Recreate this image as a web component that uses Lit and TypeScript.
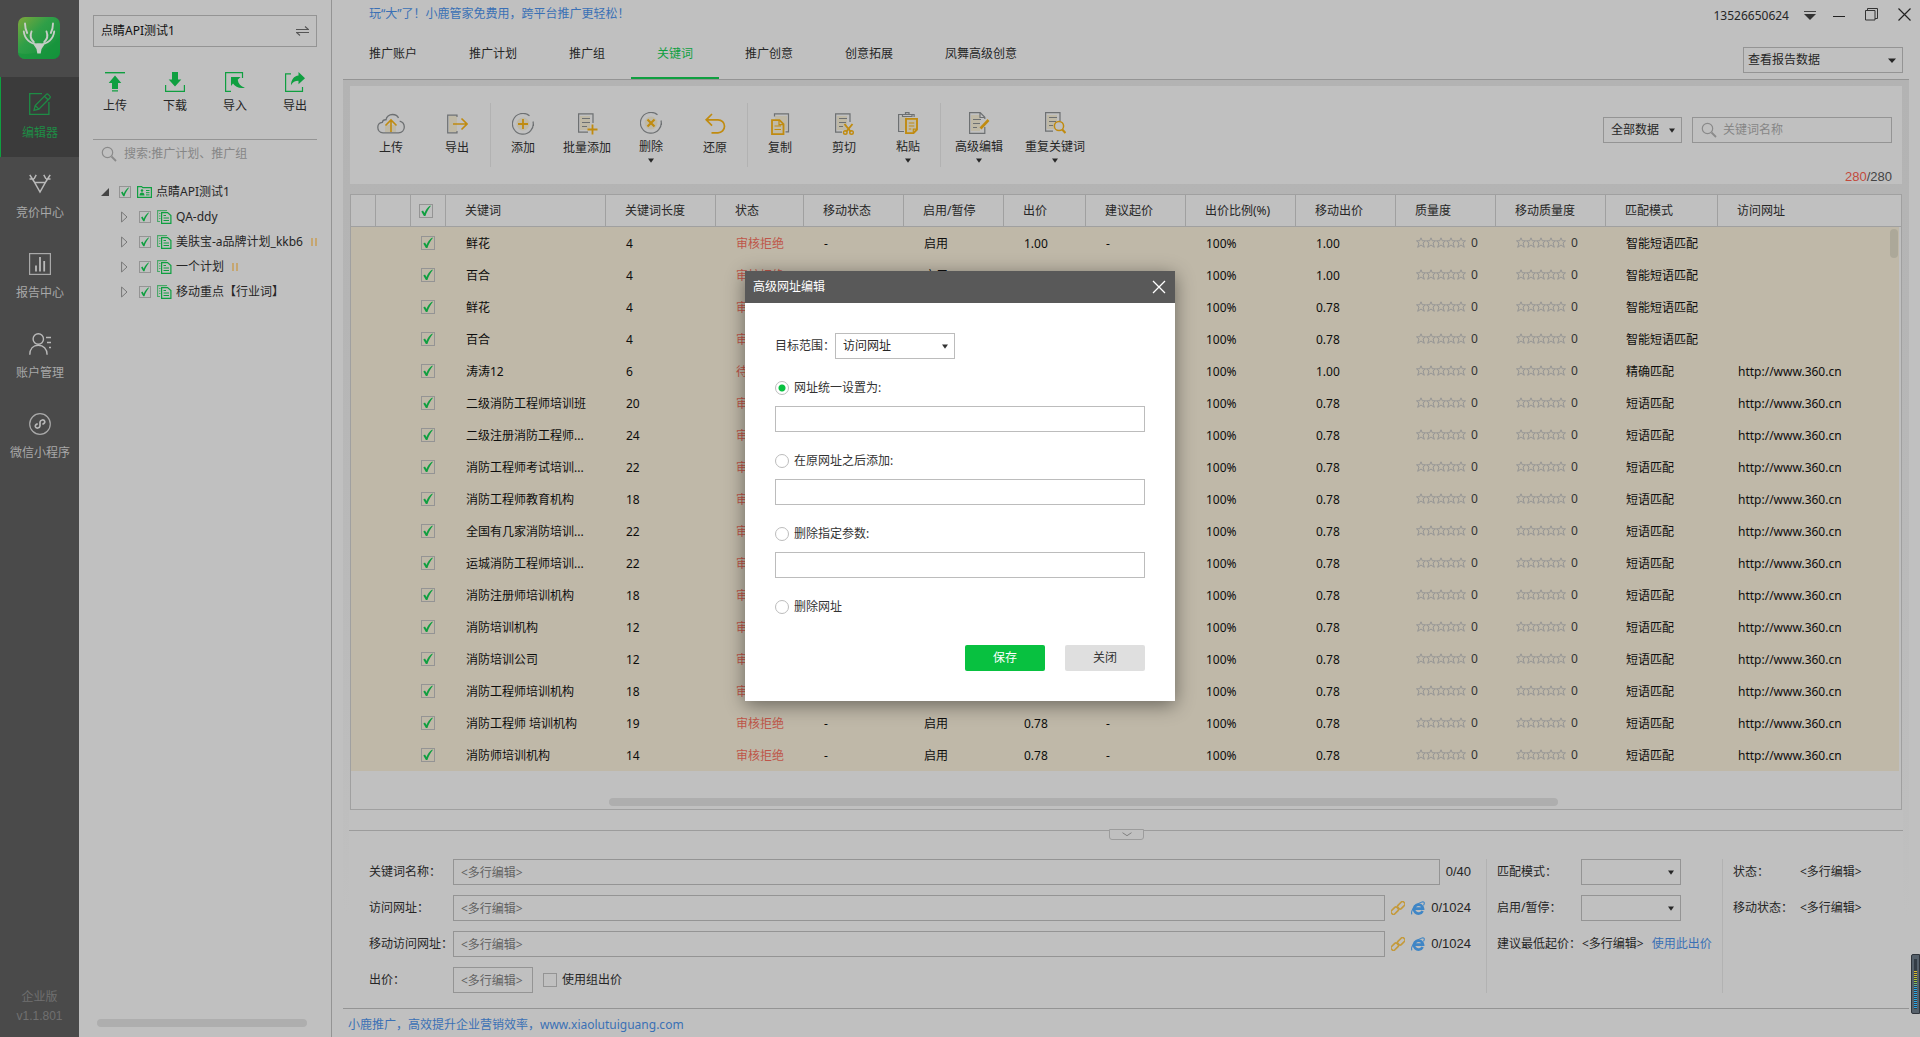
import { LitElement, html, css, svg, nothing, type TemplateResult } from "lit";
import { customElement, state } from "lit/decorators.js";
import { classMap } from "lit/directives/class-map.js";

interface Keyword {
  name: string;
  length: number;
  status: string;
  bid: string;
  match: string;
  url: string;
}

const SITE = "http://www.360.cn";
const REJECTED = "审核拒绝";

const kw = (
  name: string,
  length: number,
  bid = "0.78",
  match = "短语匹配",
  url = SITE,
  status = REJECTED,
): Keyword => ({ name, length, status, bid, match, url });

const KEYWORDS: Keyword[] = [
  kw("鲜花", 4, "1.00", "智能短语匹配", ""),
  kw("百合", 4, "1.00", "智能短语匹配", ""),
  kw("鲜花", 4, "0.78", "智能短语匹配", ""),
  kw("百合", 4, "0.78", "智能短语匹配", ""),
  kw("涛涛12", 6, "1.00", "精确匹配", SITE, "待审核"),
  kw("二级消防工程师培训班", 20),
  kw("二级注册消防工程师...", 24),
  kw("消防工程师考试培训...", 22),
  kw("消防工程师教育机构", 18),
  kw("全国有几家消防培训...", 22),
  kw("运城消防工程师培训...", 22),
  kw("消防注册师培训机构", 18),
  kw("消防培训机构", 12),
  kw("消防培训公司", 12),
  kw("消防工程师培训机构", 18),
  kw("消防工程师 培训机构", 19),
  kw("消防师培训机构", 14),
];

const COLUMNS = [
  "关键词", "关键词长度", "状态", "移动状态", "启用/暂停", "出价", "建议起价",
  "出价比例(%)", "移动出价", "质量度", "移动质量度", "匹配模式", "访问网址",
];

const TABS = ["推广账户", "推广计划", "推广组", "关键词", "推广创意", "创意拓展", "凤舞高级创意"];

const PLANS = [
  { name: "QA-ddy", paused: false },
  { name: "美肤宝-a品牌计划_kkb6", paused: true },
  { name: "一个计划", paused: true },
  { name: "移动重点【行业词】", paused: false },
];

/* ---------- icons ---------- */

const icon = (w: number, h: number, body: TemplateResult) =>
  html`<svg width=${w} height=${h} viewBox="0 0 ${w} ${h}" fill="none" aria-hidden="true">${body}</svg>`;

const G = "#6d7072";
const Y = "#c08b10";
const P = "#bfb9a6";
const GREEN = "#0f9f40";

const caret = () =>
  html`<svg class="caret" width="8" height="5" viewBox="0 0 8 5" aria-hidden="true"><path d="M0 .5h8L4 5z" fill="currentColor"/></svg>`;

const smallCaret = () =>
  html`<svg class="caret" width="6" height="5" viewBox="0 0 6 5" aria-hidden="true"><path d="M0 .5h6L3 4.8z" fill="currentColor"/></svg>`;

const magnifier = () =>
  icon(16, 16, svg`<circle cx="6.5" cy="6.5" r="5.2" stroke="#8a8a8a" stroke-width="1.2"/><path d="M10.5 10.5l4.5 4.5" stroke="#8a8a8a" stroke-width="1.8"/>`);

const logo = () => icon(42, 42, svg`
  <defs><linearGradient id="lg" x1="0" y1="0" x2="1" y2="1">
    <stop offset="0" stop-color="#7fa83c"/><stop offset=".4" stop-color="#2f9f48"/><stop offset="1" stop-color="#0f8f38"/>
  </linearGradient></defs>
  <rect width="42" height="42" rx="7" fill="url(#lg)"/>
  <path d="M0 36C14 40 32 32 42 19v16a7 7 0 0 1-7 7H7a7 7 0 0 1-7-6z" fill="#15953c" opacity=".6"/>
  <g stroke="#c6cdc6" stroke-width="1.9" stroke-linecap="round">
    <path d="M7 6.500c0 4 .6 6.500 2.200 9.500M35 6.500c0 4-.6 6.500-2.200 9.500"/>
    <path d="M5.800 14.500C6.500 21.500 12 27.500 21 27.500S35.500 21.500 36.200 14.500"/>
    <path d="M13.500 14.500c-1.600 4-.5 8 2.300 10.500M28.500 14.500c1.600 4 .5 8-2.300 10.500"/>
  </g>
  <path d="M15.500 27.500c3-1.200 8-1.200 11 0L23.500 32l-.8 4.600h-3.400L18.500 32z" fill="#c6cdc6"/>`);

const railIcons = {
  editor: icon(22, 22, svg`<g stroke="#1e8c45" stroke-width="1.300"><path d="M13 .7H.7v20.600h19.200V9"/><path d="M5 17.300l1.200-4.800L17.300 1.400a1.300 1.300 0 0 1 1.900 0l1.700 1.700a1.300 1.300 0 0 1 0 1.900L9.800 16.100zM15.500 3.300l3.500 3.500M6.200 12.500l3.600 3.600"/></g>`),
  bid: icon(22, 20, svg`<g stroke="#b9b9b9" stroke-width="1.500"><path d="M.8.8L5 7.500 11 18l6-10.500L21.200.8M7.200.8L5 5M14.800.8L17 5M.5 5H5M17 5h4.500M5 8.500h12"/></g>`),
  report: icon(22, 22, svg`<rect x=".6" y=".6" width="20.800" height="20.800" stroke="#a9a9a9" stroke-width="1.200"/><path d="M7 18.500v-6M11 18.500V4M15.200 18.500V8" stroke="#b9b9b9" stroke-width="1.800"/>`),
  account: icon(22, 22, svg`<g stroke="#b9b9b9" stroke-width="1.400"><circle cx="9.300" cy="6" r="5.200"/><path d="M.8 21.800c0-6 3.500-9.500 8.500-9.500s8.800 3.500 8.800 9.500M17 4.500h5M18 9.500h4M20 14.500h2"/></g>`),
  mini: icon(22, 22, svg`<circle cx="11" cy="11" r="10.300" stroke="#a9a9a9" stroke-width="1.200"/><path d="M8.700 10.900c-1.900.3-2.700 1.600-2.300 2.900.6 1.800 4.300 1.700 4.600-1V9.200c.3-2.700 4-2.800 4.700-1 .4 1.400-.5 2.600-2.300 2.900" stroke="#b9b9b9" stroke-width="1.700"/>`),
};

const sideIcons = {
  up: icon(20, 20, svg`<path d="M0 .7h20" stroke=${GREEN} stroke-width="1.400"/><path d="M10 3.500l6.300 7.500H13v6H7v-6H3.700zM7 18.200h6v1.300H7z" fill=${GREEN}/>`),
  down: icon(20, 20, svg`<path d="M.6 13v6.300h18.800V13" stroke=${GREEN} stroke-width="1.200"/><path d="M7 0h6v7.500h3.300L10 14.500 3.700 7.500H7z" fill=${GREEN}/>`),
  import: icon(20, 20, svg`<path d="M17.500 6V.6H.6v18.800H6" stroke=${GREEN} stroke-width="1.200"/><path d="M6 5h9.500l-2.800 2.800c.5 4 3 6.700 7.300 8-5.500 1-10-.8-12-4.200L6 14z" fill=${GREEN}/>`),
  export: icon(20, 20, svg`<path d="M6 1.800H.6v17.600h16.900V15" stroke=${GREEN} stroke-width="1.200"/><path d="M13.500 0L20 6.200l-6.500 6V8.800C10 8.800 7.500 10.200 6 13.200 6 7.800 9 4 13.500 3.500z" fill=${GREEN}/>`),
};

const accountIcon = icon(15, 12, svg`<path d="M.6 1.600V.6h4l1.200 1h8.600v9.800H.6z" stroke=${GREEN} stroke-width="1.200"/><circle cx="5" cy="4.500" r="1.300" fill=${GREEN}/><path d="M2.500 9.500c0-2 1-3 2.500-3s2.500 1 2.500 3z" fill=${GREEN}/><path d="M9 4.500h3.500M9 6.700h3.500M9 8.900h3.500" stroke=${GREEN}/>`);
const planIcon = icon(15, 14, svg`<path d="M9.500 1V.6H.6v10.900H3" stroke="#4aa868" stroke-width="1.100"/><path d="M2 3.500h1.500M2 6h1.500M2 8.500h1.500" stroke="#4aa868"/><path d="M4.600 2.600h6l3.300 3v7.800H4.600z" stroke=${GREEN} stroke-width="1.200"/><path d="M6.500 5.500H9M6.500 8H12M6.500 10.500H12" stroke=${GREEN} stroke-width="1.200"/>`);
const pauseIcon = icon(6, 8, svg`<path d="M1 0v8M5 0v8" stroke="#c79d55" stroke-width="1.500"/>`);

const toolIcons: Record<string, TemplateResult> = {
  upload: icon(28, 22, svg`<path d="M21.500 5C20.500 2.500 18 1.500 15.500 1.500c-3.500 0-6 2.500-6.500 5.300C7 6.600 5.700 7.500 5.300 9.300 2.500 9.600.8 11.500.8 14.300c0 3 2 5.500 5.200 5.500h15.500c3.500 0 5.800-2.500 5.800-5.700 0-2.900-2-5.200-4.600-5.900" stroke=${G} stroke-width="1.300"/><path d="M8 12h11v7H8z" fill=${P}/><path d="M14 19V7M8.500 12.500L14 7l5.500 5.500" stroke=${Y} stroke-width="1.600"/>`),
  export: icon(22, 22, svg`<path d="M3 3h8v16H3z" fill=${P}/><path d="M11 4V2.200H1.700v17.600H11V18" stroke=${G} stroke-width="1.200"/><path d="M7 11h14M15.500 5.500L21 11l-5.500 5.500" stroke=${Y} stroke-width="1.600"/>`),
  add: icon(22, 22, svg`<circle cx="11" cy="11" r="6.500" fill=${P}/><path d="M21 8.500A10.400 10.400 0 1 1 17.500 2.800M21.400 11v2" stroke=${G} stroke-width="1.200"/><path d="M11 6v10M6 11h10" stroke=${Y} stroke-width="1.800"/>`),
  batch: icon(22, 22, svg`<path d="M4 3h10v14H4z" fill=${P}/><path d="M17 10V.8H2.600v18.400H12" stroke=${G} stroke-width="1.200"/><path d="M6 5.500h8M6 9.500h8M6 13.500h5" stroke=${G} stroke-width="1.200"/><path d="M16.500 11.500v10M11.500 16.500h10" stroke=${Y} stroke-width="1.800"/>`),
  remove: icon(22, 22, svg`<circle cx="11" cy="11" r="6.500" fill=${P}/><path d="M21 8.500A10.400 10.400 0 1 1 17.500 2.800M21.400 11v2" stroke=${G} stroke-width="1.200"/><path d="M7.500 7.500l7 7M14.500 7.500l-7 7" stroke=${Y} stroke-width="2.200"/>`),
  restore: icon(22, 22, svg`<path d="M8 1L2.200 6.800 8 12.600M2.500 6.800H14a6.500 6.500 0 0 1 0 13H7.500" stroke=${Y} stroke-width="1.700"/>`),
  copy: icon(22, 22, svg`<path d="M6 3h12v14H6z" fill=${P}/><path d="M5.500 3.500V.8h14v18h-3" stroke=${G} stroke-width="1.200"/><path d="M3 7.200h7.500l4 4v9.900H3z" fill="#c0bba8" stroke=${Y} stroke-width="1.800"/><path d="M10 7.500v4.200h4M5.500 13h6.500M5.500 16.500h6.500" stroke=${Y} stroke-width="1.200"/>`),
  cut: icon(22, 22, svg`<path d="M4 3h10v14H4z" fill=${P}/><path d="M17 9V.8H2.600v18.400H9" stroke=${G} stroke-width="1.200"/><path d="M6 5.500h8M6 9.500h7M6 13.500h4" stroke=${G} stroke-width="1.200"/><path d="M11.500 11l6.500 8M19.500 11L13 19" stroke=${Y} stroke-width="1.900"/><circle cx="12.300" cy="19.500" r="1.800" stroke=${Y} stroke-width="1.400"/><circle cx="18.500" cy="19.500" r="1.800" stroke=${Y} stroke-width="1.400"/>`),
  paste: icon(22, 22, svg`<path d="M3 5h7v13H3z" fill=${P}/><path d="M7 19.500H1.600V2.500h15.500V5M5.500 4.500v-2h3V.7h3.500v1.800h3v2z" stroke=${G} stroke-width="1.200"/><path d="M9 6.900h11v10.600l-3.500 3.600H9z" fill="#c0bba8" stroke=${Y} stroke-width="1.900"/><path d="M11.800 11h5.500M11.800 14h5.500M11.800 17h2.500M16.300 20.500v-3.300h3.500" stroke=${Y} stroke-width="1.200"/>`),
  edit: icon(22, 22, svg`<path d="M3 3h9v16H3z" fill=${P}/><path d="M16.800 15v6.300H1.600V.7h10.600l4.600 4.600V7M12 .7v4.800h4.600" stroke=${G} stroke-width="1.200"/><path d="M5 7.500h8M5 11.500h7M5 15.500h4" stroke=${G} stroke-width="1.200"/><path d="M12.500 16.500l8-8.500" stroke=${Y} stroke-width="2.600"/>`),
  repeat: icon(22, 22, svg`<path d="M3 3h10v14H3z" fill=${P}/><path d="M16 9V.7H1.600v18.500H9" stroke=${G} stroke-width="1.200"/><path d="M5 5.500h8M5 9.500h7M5 13.500h4" stroke=${G} stroke-width="1.200"/><circle cx="15" cy="14" r="4.600" fill="#c0c0c0" stroke=${Y} stroke-width="1.500"/><path d="M18.200 17.500l3.300 3.500" stroke=${Y} stroke-width="2.200"/>`),
};

const TOOL_GROUPS = [
  [["upload", "上传", ""], ["export", "导出", ""]],
  [["add", "添加", ""], ["batch", "批量添加", ""], ["remove", "删除", "m"], ["restore", "还原", ""]],
  [["copy", "复制", ""], ["cut", "剪切", ""], ["paste", "粘贴", "m"]],
  [["edit", "高级编辑", "m"], ["repeat", "重复关键词", "m"]],
];

const starPath = "M5 .8l1.300 3h3.200L7 6l1.300 4.300L5 8 1.700 10.300 3 6 .5 3.800h3.200z";
const stars = () => html`<svg width="50" height="12" viewBox="0 0 50 12" fill="none" role="img" aria-label="质量度">
  ${[0, 10, 20, 30, 40].map((x) => svg`<path transform="translate(${x} 0)" d=${starPath} stroke="#959595"/>`)}</svg>`;

const linkIcon = icon(14, 14, svg`<g stroke="#c49a3c" stroke-width="1.700"><rect x="6.300" y="2" width="8" height="4.600" rx="1.600" transform="rotate(-45 10.300 4.300)"/><rect x="-.3" y="7.400" width="8" height="4.600" rx="1.600" transform="rotate(-45 3.700 9.700)"/></g>`);
const browserIcon = icon(14, 14, svg`<path d="M11.600 10A4.500 4.500 0 1 1 12 7.700H4" stroke="#3f86c6" stroke-width="2.700"/><path d="M1 13.300C-.5 11.500 2 6.500 6 3.500S13 .2 13.300 1.800c.1.800-.2 1.700-.8 2.600" stroke="#3f86c6" stroke-width="1.100"/>`);

const CHECK = css`url("data:image/svg+xml,%3Csvg xmlns='http://www.w3.org/2000/svg' viewBox='0 0 12 12'%3E%3Cpath d='M1.300 6.600L3 5.500 4.500 8C5.700 5 7.600 2.200 10.200.6L10.800 1C8.500 4 6.600 7.400 5.400 11H3.900z' fill='%230f9f40'/%3E%3C/svg%3E")`;

@customElement("app-root")
export class AppRoot extends LitElement {
  @state() private mode = 0;
  @state() private dialogOpen = true;

  static styles = css`
    :host {
      display: block;
      position: relative;
      font: 12px/16px "Noto Sans", "Noto Sans CJK SC", sans-serif;
      color: #262626;
      background: #c0c0c0;
    }
    * { box-sizing: border-box; }
    button, input, select { font: inherit; color: inherit; margin: 0; }
    button { background: none; border: 0; padding: 0; cursor: pointer; }
    a { color: #3a70b5; text-decoration: none; }
    svg { display: block; flex: none; }
    .app { display: grid; grid-template-columns: 79px 253px minmax(0, 1fr); min-height: 100vh; }

    /* navigation rail */
    .rail { background: #4a4a4a; color: #a8a8a8; display: flex; flex-direction: column; }
    .logo { padding: 17px 0 18px 18px; }
    .rail-item {
      height: 80px; display: flex; flex-direction: column; align-items: center;
      gap: 10px; padding-top: 16px; border-left: 1px solid transparent;
    }
    .rail-item svg { height: 22px; }
    .rail-item.on { background: #3b3b3b; color: #1e8c45; border-color: #0f9f40; }
    .version { margin-top: auto; padding-bottom: 11px; text-align: center; color: #707070; line-height: 19px; }
    .num { font-family: "Liberation Sans", "Noto Sans CJK SC", sans-serif; }
    .n13 { font-size: 13px; }

    /* account panel */
    .side { border-right: 1px solid #949494; display: flex; flex-direction: column; padding: 15px 14px 10px; }
    .account {
      height: 32px; border: 1px solid #949494; padding: 0 7px; display: flex;
      align-items: center; justify-content: space-between; color: #111;
    }
    .side-tools { display: flex; justify-content: space-between; padding: 25px 8px 0; height: 93px; border-bottom: 1px solid #949494; }
    .side-tools button { display: flex; flex-direction: column; align-items: center; gap: 6px; width: 28px; height: 44px; }
    .search-line { display: flex; align-items: center; gap: 7px; height: 28px; padding-left: 8px; }
    .search-line input, .kw-search input { border: 0; background: none; outline: 0; min-width: 0; flex: 1; padding: 0; }
    ::placeholder { color: #868686; opacity: 1; }
    .tree { list-style: none; margin: 0; padding: 11px 0 0 8px; overflow: hidden; }
    .tree ul { list-style: none; margin: 0; padding: 0 0 0 20px; }
    .node { display: flex; align-items: center; height: 25px; gap: 6px; white-space: nowrap; }
    .node button { width: 12px; height: 12px; display: grid; place-items: center start; }
    .node label { display: flex; align-items: center; gap: 4px; }
    .pause { margin-left: 2px; }
    .side-scroll { margin: auto 10px 0 4px; height: 8px; border-radius: 4px; background: #aeaeae; }

    .check {
      appearance: none; width: 14px; height: 14px; border: 1px solid #949494;
      background: transparent; display: block; flex: none;
    }
    .check.sm { width: 12px; height: 12px; }
    .check:checked { background: ${CHECK} center / contain no-repeat; }

    /* main column */
    .main { display: flex; flex-direction: column; padding: 0 11px; min-width: 0; }
    .head { height: 80px; border-bottom: 1px solid #949494; display: flex; justify-content: space-between; }
    .promo { display: block; padding: 6px 26px 0; height: 31px; }
    .tabs { display: flex; }
    .tab { height: 48px; padding: 0 26px; border-bottom: 2px solid transparent; }
    .tab.on { color: #0f9f40; border-color: #0f9f40; }
    .head-right { display: flex; flex-direction: column; align-items: flex-end; }
    .win { display: flex; align-items: flex-start; height: 47px; padding-top: 6px; margin-right: -2px; }
    .win .phone { padding: 2px 15px 0 0; }
    .win button { height: 16px; }
    .win .wb { margin-left: 20px; }
    .win .wb.first { margin-left: 17px; }

    .pick { display: inline-grid; align-items: center; }
    .pick select {
      grid-area: 1 / 1; appearance: none; height: 26px; width: 100%; border: 1px solid #949494;
      border-radius: 0; background: transparent; padding: 0 7px; outline: 0; color: #262626;
    }
    .pick .caret { grid-area: 1 / 1; justify-self: end; margin-right: 7px; pointer-events: none; }
    .pick.report { width: 160px; margin-right: 6px; }
    .pick.report select { padding: 0 4px; }
    .pick.all { width: 79px; }
    .pick.w100 { width: 100px; }
    .pick.w120 { width: 120px; }

    .frame {
      flex: 1; padding: 6px 7px 0; display: flex; flex-direction: column;
      background: linear-gradient(#b3b3b3, #b5b5b5 25%, #c0c0c0 90%);
    }
    .toolbar { background: #c0c0c0; height: 98px; display: flex; justify-content: space-between; margin-bottom: 10px; }
    .tools { display: flex; padding-left: 8px; }
    .group { display: flex; padding-right: 1px; }
    .group + .group::before { content: ""; width: 1px; height: 64px; margin: 17px 0 0 -1px; background: #b2b2b2; }
    .tool { width: 64px; display: flex; flex-direction: column; align-items: center; gap: 6px; padding-top: 27px; line-height: 14px; white-space: nowrap; }
    .tool.menu { padding-top: 26px; }
    .tool .caret { margin-top: -2px; }
    .group:first-child .tool { width: 66px; }
    .group.wide .tool { width: 76px; }
    .filters { display: grid; grid-template-columns: auto 200px; column-gap: 10px; align-content: start; padding: 31px 10px 0 0; }
    .kw-search { height: 26px; border: 1px solid #949494; display: flex; align-items: center; gap: 6px; padding: 0 8px; }
    .count { grid-column: 1 / -1; text-align: right; padding-top: 26px; color: #444; }
    .count b { font-weight: 400; color: #c24a3c; }

    .grid-box { flex: 1; border: 1px solid #a0a0a0; background: #c0c0c0; display: flex; flex-direction: column; position: relative; }
    table { width: 100%; table-layout: fixed; border-collapse: separate; border-spacing: 0; }
    th { height: 32px; padding: 0 0 0 19px; font-weight: 400; text-align: left; border-right: 1px solid #a0a0a0; border-bottom: 1px solid #a0a0a0; white-space: nowrap; }
    th:last-child { border-right: 0; }
    td { height: 32px; padding: 2px 0 0 20px; background: #bfb8a8; color: #0d0d0d; white-space: nowrap; }
    td:last-child { border-right: 2px solid #c0c0c0; }
    td.rating { padding-top: 0; }
    th.pick-col { padding: 0 0 0 8px; }
    td.pick-col { padding: 0 0 0 10px; }
    .bad { color: #be5549; }
    .quality { display: flex; align-items: center; gap: 5px; color: #333; }
    .c25 { width: 25px; } .c35 { width: 35px; } .c160 { width: 160px; } .c110 { width: 110px; }
    .c88 { width: 88px; } .c100 { width: 100px; } .c82 { width: 82px; } .c112 { width: 112px; }
    .v-thumb { position: absolute; top: 34px; right: 3px; width: 8px; height: 29px; border-radius: 4px; background: #aca899; }
    .h-thumb { margin: auto 343px 3px 258px; height: 8px; border-radius: 4px; background: #aeaeae; }

    .splitter { height: 49px; padding-top: 20px; margin: 0 -1px; background: #c0c0c0; position: relative; }
    .splitter hr { border: 0; height: 1px; margin: 0; background: #9c9c9c; }
    .splitter button {
      position: absolute; top: 19px; left: 760px; width: 35px; height: 11px;
      border: 1px solid #9c9c9c; border-radius: 0 0 3px 3px; background: #c0c0c0; display: grid; place-items: center;
    }

    .details { display: flex; background: #c0c0c0; padding: 0 0 15px 20px; margin: 0 -1px; }
    .fields { flex: 1; display: grid; grid-template-columns: 84px minmax(0, 1fr); row-gap: 10px; align-items: center; padding-right: 15px; }
    .line { display: flex; align-items: center; gap: 6px; }
    .text { height: 26px; border: 1px solid #949494; background: transparent; padding: 0 7px; outline: 0; min-width: 0; border-radius: 0; }
    .text::placeholder { color: #626262; }
    .line .text { flex: 1; }
    .line .text.price { flex: none; width: 80px; }
    .group-bid { display: flex; align-items: center; gap: 5px; padding-left: 4px; }
    .props { display: grid; grid-auto-rows: 26px; row-gap: 10px; align-content: start; align-items: center; border-left: 1px solid #b2b2b2; padding-left: 10px; white-space: nowrap; }
    .props.mid { grid-template-columns: 84px 141px; }
    .props.end { grid-template-columns: 66px 103px; padding-right: 1px; }
    .value { padding-left: 1px; }
    .use { margin-left: 8px; }

    .foot { height: 29px; border-top: 1px solid #949494; padding: 8px 5px 0; }

    /* desktop level meter that floats over the window edge */
    .meter { position: absolute; right: 0; top: 954px; width: 9px; height: 60px; border: 1px solid #2f353c; border-radius: 2px 0 0 2px; background: #56616b; padding: 4px 2px; }
    .meter i { display: block; height: 100%; background:
      repeating-linear-gradient(transparent 0 1px, #333c45 1px 2px),
      linear-gradient(#333c45 25%, #d9b92c 25% 32%, #9fc83a 45%, #2aa8e8 58%); }

    /* dialog */
    .scrim { position: absolute; inset: 0; display: flex; justify-content: center; align-items: flex-start; padding-top: 271px; }
    .dialog { width: 430px; min-height: 430px; background: #fff; box-shadow: 0 4px 18px rgba(0, 0, 0, .45); color: #333; }
    .dialog header { height: 32px; background: #595959; color: #fff; display: flex; justify-content: space-between; align-items: center; padding: 0 9px 0 8px; }
    .dialog h2 { font: inherit; margin: 0; }
    .dialog form { padding: 30px; }
    .dialog .pick select, .dialog .text { border-color: #bcbcbc; }
    .scope { display: flex; align-items: center; height: 26px; margin-bottom: 21px; }
    .scope label { width: 60px; white-space: nowrap; }
    .option { display: flex; align-items: center; gap: 5px; height: 16px; }
    .radio { appearance: none; width: 14px; height: 14px; border: 1px solid #bcbcbc; border-radius: 50%; flex: none; }
    .radio:checked { background: radial-gradient(circle, #08c140 0 3px, transparent 4px); }
    .dialog .text { display: block; width: 100%; margin: 10px 0 21px; }
    .actions { display: flex; justify-content: flex-end; gap: 20px; margin-top: 30px; }
    .actions button { width: 80px; height: 26px; border-radius: 2px; background: #dfdfdf; }
    .actions .save { background: #08c140; color: #fff; }
  `;

  private renderRail() {
    const items: [TemplateResult, string][] = [
      [railIcons.editor, "编辑器"],
      [railIcons.bid, "竞价中心"],
      [railIcons.report, "报告中心"],
      [railIcons.account, "账户管理"],
      [railIcons.mini, "微信小程序"],
    ];
    return html`<nav class="rail">
      <div class="logo">${logo()}</div>
      ${items.map(([pic, label], i) => html`<button class=${classMap({ "rail-item": true, on: i === 0 })}>${pic}<span>${label}</span></button>`)}
      <div class="version">企业版<br /><span class="num">v1.1.801</span></div>
    </nav>`;
  }

  private renderSide() {
    return html`<aside class="side">
      <button class="account"><span>点睛API测试1</span>
        ${icon(13, 10, svg`<path d="M0 3.500h12.500L9 .5M13 6.500H.5L4 9.500" stroke="#555" stroke-width="1.100"/>`)}
      </button>
      <div class="side-tools">
        <button>${sideIcons.up}<span>上传</span></button>
        <button>${sideIcons.down}<span>下载</span></button>
        <button>${sideIcons.import}<span>导入</span></button>
        <button>${sideIcons.export}<span>导出</span></button>
      </div>
      <div class="search-line">${magnifier()}<input type="text" placeholder="搜索:推广计划、推广组" aria-label="搜索" /></div>
      <ul class="tree">
        <li>
          <div class="node">
            <button aria-label="收起">${icon(8, 8, svg`<path d="M8 0v8H0z" fill="#444"/>`)}</button>
            <input class="check sm" type="checkbox" id="root" .checked=${true} />
            <label for="root">${accountIcon}<span>点睛API测试1</span></label>
          </div>
          <ul>
            ${PLANS.map((p, i) => html`<li class="node">
              <button aria-label="展开">${icon(7, 12, svg`<path d="M.6 1l5.400 5-5.400 5z" stroke="#777" stroke-width="1"/>`)}</button>
              <input class="check sm" type="checkbox" id="plan-${i}" .checked=${true} />
              <label for="plan-${i}">${planIcon}<span>${p.name}</span></label>
              ${p.paused ? html`<span class="pause">${pauseIcon}</span>` : nothing}
            </li>`)}
          </ul>
        </li>
      </ul>
      <div class="side-scroll"></div>
    </aside>`;
  }

  private renderHead() {
    return html`<header class="head">
      <div>
        <a class="promo" href="#promo">玩“大”了！小鹿管家免费用，跨平台推广更轻松！</a>
        <nav class="tabs">
          ${TABS.map((t, i) => html`<button class=${classMap({ tab: true, on: i === 3 })}>${t}</button>`)}
        </nav>
      </div>
      <div class="head-right">
        <div class="win">
          <span class="phone">13526650624</span>
          <button aria-label="菜单">${icon(12, 16, svg`<path d="M0 5.500h12" stroke="#444"/><path d="M0 8h12l-6 6z" fill="#333"/>`)}</button>
          <button class="wb first" aria-label="最小化">${icon(12, 16, svg`<path d="M0 10.500h12" stroke="#222"/>`)}</button>
          <button class="wb" aria-label="还原窗口">${icon(13, 13, svg`<path d="M.5 2.500h9.500v9.500H.5zM2.500 2.500v-2h10v10h-2.500" stroke="#333"/>`)}</button>
          <button class="wb" aria-label="关闭窗口">${icon(13, 13, svg`<path d="M.5.5l12 12M12.500.5l-12 12" stroke="#222" stroke-width="1.200"/>`)}</button>
        </div>
        <div class="pick report"><select aria-label="报告数据"><option>查看报告数据</option></select>${caret()}</div>
      </div>
    </header>`;
  }

  private renderToolbar() {
    return html`<section class="toolbar">
      <div class="tools">
        ${TOOL_GROUPS.map((g, i) => html`<div class=${classMap({ group: true, wide: i === 3 })}>
          ${g.map(([key, label, menu]) => html`<button class=${classMap({ tool: true, menu: !!menu })}>
            ${toolIcons[key]}<span>${label}</span>${menu ? smallCaret() : nothing}
          </button>`)}
        </div>`)}
      </div>
      <div class="filters">
        <div class="pick all"><select aria-label="数据范围"><option>全部数据</option></select>${smallCaret()}</div>
        <div class="kw-search">${magnifier()}<input type="text" placeholder="关键词名称" aria-label="关键词名称" /></div>
        <div class="count num n13"><b>280</b>/280</div>
      </div>
    </section>`;
  }

  private renderGrid() {
    const widths = [25, 35, 35, 160, 110, 88, 100, 100, 82, 100, 110, 100, 100, 110, 112];
    return html`<section class="grid-box">
      <table>
        <colgroup>${widths.map((w) => html`<col class="c${w}" />`)}<col /></colgroup>
        <thead><tr>
          <th></th><th></th>
          <th class="pick-col"><input class="check" type="checkbox" aria-label="全选" .checked=${true} /></th>
          ${COLUMNS.map((c) => html`<th>${c}</th>`)}
        </tr></thead>
        <tbody>
          ${KEYWORDS.map((k) => html`<tr>
            <td></td><td></td>
            <td class="pick-col"><input class="check" type="checkbox" aria-label=${k.name} .checked=${true} /></td>
            <td>${k.name}</td><td>${k.length}</td><td><span class="bad">${k.status}</span></td>
            <td>-</td><td>启用</td><td>${k.bid}</td><td>-</td><td>100%</td><td>${k.bid}</td>
            <td class="rating"><div class="quality">${stars()}0</div></td>
            <td class="rating"><div class="quality">${stars()}0</div></td>
            <td>${k.match}</td><td>${k.url}</td>
          </tr>`)}
        </tbody>
      </table>
      <div class="v-thumb"></div>
      <div class="h-thumb"></div>
    </section>`;
  }

  private renderDetails() {
    const many = "<多行编辑>";
    return html`
      <div class="splitter"><hr /><button aria-label="收起">${icon(10, 5, svg`<path d="M.5.7l4.500 3 4.500-3" stroke="#808080"/>`)}</button></div>
      <section class="details">
        <div class="fields">
          <label for="f-name">关键词名称：</label>
          <div class="line"><input class="text" id="f-name" placeholder=${many} /><span class="num n13">0/40</span></div>
          <label for="f-url">访问网址：</label>
          <div class="line"><input class="text" id="f-url" placeholder=${many} />${linkIcon}${browserIcon}<span class="num n13">0/1024</span></div>
          <label for="f-murl">移动访问网址：</label>
          <div class="line"><input class="text" id="f-murl" placeholder=${many} />${linkIcon}${browserIcon}<span class="num n13">0/1024</span></div>
          <label for="f-bid">出价：</label>
          <div class="line"><input class="text price" id="f-bid" placeholder=${many} />
            <label class="group-bid"><input class="check" type="checkbox" />使用组出价</label></div>
        </div>
        <div class="props mid">
          <label for="s-match">匹配模式：</label>
          <div class="pick w100"><select id="s-match"><option></option></select>${smallCaret()}</div>
          <label for="s-on">启用/暂停：</label>
          <div class="pick w100"><select id="s-on"><option></option></select>${smallCaret()}</div>
          <span>建议最低起价：</span>
          <span class="value">${many}<a class="use" href="#use">使用此出价</a></span>
        </div>
        <div class="props end">
          <span>状态：</span><span class="value">${many}</span>
          <span>移动状态：</span><span class="value">${many}</span>
        </div>
      </section>`;
  }

  private renderDialog() {
    const options = ["网址统一设置为:", "在原网址之后添加:", "删除指定参数:", "删除网址"];
    const close = () => (this.dialogOpen = false);
    return html`<div class="scrim">
      <div class="dialog" role="dialog" aria-labelledby="dlg-title">
        <header><h2 id="dlg-title">高级网址编辑</h2>
          <button aria-label="关闭对话框" @click=${close}>${icon(14, 14, svg`<path d="M1 1l12 12M13 1L1 13" stroke="#fff" stroke-width="1.300"/>`)}</button>
        </header>
        <form @submit=${(e: Event) => e.preventDefault()}>
          <div class="scope"><label for="scope">目标范围：</label>
            <div class="pick w120"><select id="scope"><option>访问网址</option></select>${smallCaret()}</div></div>
          ${options.map((o, i) => html`
            <label class="option"><input class="radio" type="radio" name="mode" .checked=${this.mode === i} @change=${() => (this.mode = i)} />${o}</label>
            ${i < 3 ? html`<input class="text" type="text" aria-label=${o} />` : nothing}`)}
          <div class="actions">
            <button class="save" type="submit">保存</button>
            <button type="button" @click=${close}>关闭</button>
          </div>
        </form>
      </div>
    </div>`;
  }

  render() {
    return html`<div class="app">
        ${this.renderRail()}
        ${this.renderSide()}
        <main class="main">
          ${this.renderHead()}
          <div class="frame">${this.renderToolbar()}${this.renderGrid()}${this.renderDetails()}</div>
          <footer class="foot"><a href="#site">小鹿推广，高效提升企业营销效率，www.xiaolutuiguang.com</a></footer>
        </main>
      </div>
      <div class="meter"><i></i></div>
      ${this.dialogOpen ? this.renderDialog() : nothing}`;
  }
}
